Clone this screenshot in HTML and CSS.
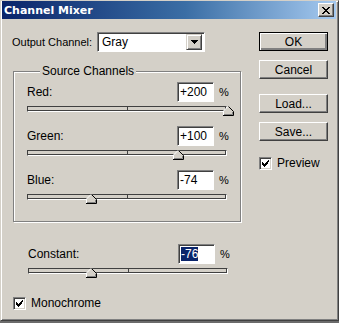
FILE: index.html
```html
<!DOCTYPE html>
<html lang="en">
<head>
    <meta charset="UTF-8">
    <title>Channel Mixer</title>
    <link rel="stylesheet" href="styles.css">
</head>
<body>
    <div class="window">
        <div class="titlebar">
            <span class="title">Channel Mixer</span>
            <button class="close-btn" type="button" aria-label="Close">
                <svg width="8" height="7" viewBox="0 0 8 7" shape-rendering="crispEdges">
                    <path d="M0 0h2v1H0zM6 0h2v1H6zM1 1h2v1H1zM5 1h2v1H5zM2 2h4v1H2zM3 3h2v1H3zM2 4h4v1H2zM1 5h2v1H1zM5 5h2v1H5zM0 6h2v1H0zM6 6h2v1H6z" fill="#000"/>
                </svg>
            </button>
        </div>

        <div class="client">
            <div class="main">
                <div class="output-row">
                    <span class="output-label">Output Channel:</span>
                    <div class="combo">
                        <span class="combo-text">Gray</span>
                        <span class="combo-arrow">
                            <svg width="7" height="4" viewBox="0 0 7 4" shape-rendering="crispEdges">
                                <path d="M0 0h7v1H0zM1 1h5v1H1zM2 2h3v1H2zM3 3h1v1H3z" fill="#000"/>
                            </svg>
                        </span>
                    </div>
                </div>

                <div class="group">
                    <div class="group-title">Source Channels</div>

                    <div class="channel">
                        <div class="channel-head">
                            <span class="channel-label">Red:</span>
                            <span class="num-box">+200</span>
                            <span class="pct">%</span>
                        </div>
                        <div class="slider">
                            <span class="thumb" style="left: 195px;"><svg width="11" height="10" viewBox="0 0 11 10"><polygon points="0.5,5 5.5,0 10.5,5 10.5,9.5 0.5,9.5" fill="#d4d0c8"/><polyline points="0.5,9 0.5,5 5,0.5" fill="none" stroke="#fff"/><polyline points="5.5,0.5 10.5,5.5 10.5,9.5 0,9.5" fill="none" stroke="#000"/><polyline points="9.5,6 9.5,8.5 1,8.5" fill="none" stroke="#808080"/></svg></span>
                        </div>
                    </div>

                    <div class="channel">
                        <div class="channel-head">
                            <span class="channel-label">Green:</span>
                            <span class="num-box">+100</span>
                            <span class="pct">%</span>
                        </div>
                        <div class="slider">
                            <span class="thumb" style="left: 145px;"><svg width="11" height="10" viewBox="0 0 11 10"><polygon points="0.5,5 5.5,0 10.5,5 10.5,9.5 0.5,9.5" fill="#d4d0c8"/><polyline points="0.5,9 0.5,5 5,0.5" fill="none" stroke="#fff"/><polyline points="5.5,0.5 10.5,5.5 10.5,9.5 0,9.5" fill="none" stroke="#000"/><polyline points="9.5,6 9.5,8.5 1,8.5" fill="none" stroke="#808080"/></svg></span>
                        </div>
                    </div>

                    <div class="channel">
                        <div class="channel-head">
                            <span class="channel-label">Blue:</span>
                            <span class="num-box">-74</span>
                            <span class="pct">%</span>
                        </div>
                        <div class="slider">
                            <span class="thumb" style="left: 58px;"><svg width="11" height="10" viewBox="0 0 11 10"><polygon points="0.5,5 5.5,0 10.5,5 10.5,9.5 0.5,9.5" fill="#d4d0c8"/><polyline points="0.5,9 0.5,5 5,0.5" fill="none" stroke="#fff"/><polyline points="5.5,0.5 10.5,5.5 10.5,9.5 0,9.5" fill="none" stroke="#000"/><polyline points="9.5,6 9.5,8.5 1,8.5" fill="none" stroke="#808080"/></svg></span>
                        </div>
                    </div>
                </div>

                <div class="channel constant">
                    <div class="channel-head">
                        <span class="channel-label">Constant:</span>
                        <span class="num-box"><span class="selected">-76</span></span>
                        <span class="pct">%</span>
                    </div>
                    <div class="slider">
                        <span class="thumb" style="left: 57px;"><svg width="11" height="10" viewBox="0 0 11 10"><polygon points="0.5,5 5.5,0 10.5,5 10.5,9.5 0.5,9.5" fill="#d4d0c8"/><polyline points="0.5,9 0.5,5 5,0.5" fill="none" stroke="#fff"/><polyline points="5.5,0.5 10.5,5.5 10.5,9.5 0,9.5" fill="none" stroke="#000"/><polyline points="9.5,6 9.5,8.5 1,8.5" fill="none" stroke="#808080"/></svg></span>
                    </div>
                </div>

                <label class="check mono">
                    <span class="check-box">
                        <svg width="7" height="7" viewBox="0 0 7 7" shape-rendering="crispEdges"><path d="M6 0h1v1H6zM5 1h2v1H5zM0 2h1v1H0zM4 2h2v1H4zM0 3h2v1H0zM3 3h3v1H3zM0 4h5v1H0zM1 5h3v1H1zM2 6h1v1H2z" fill="#000"/></svg>
                    </span>
                    <span>Monochrome</span>
                </label>
            </div>

            <div class="side">
                <button class="btn btn-default" type="button">OK</button>
                <button class="btn" type="button">Cancel</button>
                <button class="btn btn-gap" type="button">Load...</button>
                <button class="btn" type="button">Save...</button>
                <label class="check preview">
                    <span class="check-box">
                        <svg width="7" height="7" viewBox="0 0 7 7" shape-rendering="crispEdges"><path d="M6 0h1v1H6zM5 1h2v1H5zM0 2h1v1H0zM4 2h2v1H4zM0 3h2v1H0zM3 3h3v1H3zM0 4h5v1H0zM1 5h3v1H1zM2 6h1v1H2z" fill="#000"/></svg>
                    </span>
                    <span>Preview</span>
                </label>
            </div>
        </div>
    </div>
</body>
</html>
```

FILE: styles.css
```css
body {
    margin: 0;
    background: #6b6b6b;
    font-family: 'Liberation Sans', Arial, sans-serif;
    font-size: 11px;
    color: #000;
}
.window {
    width: 339px;
    height: 321px;
    box-sizing: border-box;
    background: #d4d0c8;
    border: 1px solid;
    border-color: #d4d0c8 #404040 #404040 #d4d0c8;
    box-shadow: inset 1px 1px #fff, inset -1px -1px #808080;
    padding: 0 2px 0 1px;
}
.titlebar {
    height: 18px;
    display: flex;
    align-items: center;
    justify-content: space-between;
    background: linear-gradient(90deg, #0a246a 0%, #3a6ea5 55%, #a6caf0 100%);
    padding: 0 2px 0 2px;
}
.title {
    color: #fff;
    font-family: 'DejaVu Sans', sans-serif;
    font-weight: bold;
    font-size: 11px;
}
.close-btn {
    width: 16px;
    height: 14px;
    padding: 0;
    display: flex;
    align-items: center;
    justify-content: center;
    background: #d4d0c8;
    border: 1px solid;
    border-color: #fff #404040 #404040 #fff;
    box-shadow: inset -1px -1px #808080;
}

/* client area */
.client {
    display: flex;
    gap: 16px;
    padding: 13px 0 0 10px;
}
.main {
    width: 231px;
}
.output-row {
    display: flex;
    align-items: center;
}
.output-label {
    width: 85px;
}
.combo {
    width: 108px;
    height: 20px;
    box-sizing: border-box;
    display: flex;
    align-items: center;
    background: #fff;
    border: 1px solid;
    border-color: #808080 #fff #fff #808080;
    box-shadow: inset 1px 1px #404040;
    padding: 2px 2px 2px 4px;
}
.combo-text {
    flex: 1;
    font-size: 12px;
}
.combo-arrow {
    width: 16px;
    height: 16px;
    box-sizing: border-box;
    display: flex;
    align-items: center;
    justify-content: center;
    background: #d4d0c8;
    border: 1px solid;
    border-color: #d4d0c8 #404040 #404040 #d4d0c8;
    box-shadow: inset 1px 1px #fff, inset -1px -1px #808080;
}

/* group box */
.group {
    margin: 19px 0 0 1px;
    width: 228px;
    height: 151px;
    box-sizing: border-box;
    border: 1px solid #808080;
    box-shadow: inset 1px 1px #fff, 1px 1px #fff;
    padding: 0 0 0 13px;
}
.group-title {
    width: max-content;
    margin: -7px 0 4px 13px;
    padding: 0 2px;
    line-height: 13px;
    font-size: 12px;
    background: #d4d0c8;
}

.channel {
    width: 200px;
    margin-bottom: 14px;
}
.channel-head {
    display: flex;
    align-items: center;
    height: 20px;
}
.channel-label {
    flex: 1;
    font-size: 12px;
}
.num-box {
    width: 37px;
    height: 20px;
    box-sizing: border-box;
    background: #fff;
    border: 1px solid;
    border-color: #808080 #fff #fff #808080;
    box-shadow: inset 1px 1px #404040;
    padding: 2px 0 0 2px;
    font-size: 12px;
    line-height: 15px;
}
.selected {
    background: #0a246a;
    color: #fff;
}
.pct {
    width: 8px;
    margin-left: 5px;
    font-size: 11px;
}
.slider {
    position: relative;
    margin-top: 4px;
    height: 6px;
    box-sizing: border-box;
    background: #d4d0c8;
    border: 1px solid;
    border-color: #404040 #fff #fff #404040;
    box-shadow: inset -1px -1px #404040;
}
.slider::after {
    content: '';
    position: absolute;
    left: 99px;
    top: 0;
    width: 1px;
    height: 4px;
    background: #404040;
}
.thumb {
    position: absolute;
    top: -1px;
    display: block;
    width: 11px;
    height: 10px;
    z-index: 1;
}
.thumb svg {
    display: block;
}

.constant {
    margin: 22px 0 0 16px;
    width: 200px;
}

/* checkboxes */
.check {
    display: flex;
    align-items: center;
    gap: 5px;
    font-size: 12px;
}
.check-box {
    width: 13px;
    height: 13px;
    box-sizing: border-box;
    display: flex;
    align-items: center;
    justify-content: center;
    background: #fff;
    border: 1px solid;
    border-color: #808080 #fff #fff #808080;
    box-shadow: inset 1px 1px #404040, inset -1px -1px #d4d0c8;
}
.mono {
    margin: 22px 0 0 1px;
}

/* right column */
.side {
    display: flex;
    flex-direction: column;
    width: 69px;
}
.btn {
    width: 69px;
    height: 19px;
    margin-bottom: 9px;
    padding: 0;
    font-family: inherit;
    font-size: 12px;
    background: #d4d0c8;
    border: 1px solid;
    border-color: #fff #404040 #404040 #fff;
    box-shadow: inset -1px -1px #808080;
}
.btn-default {
    border-color: #000;
    box-shadow: inset 1px 1px #fff, inset -2px -2px #808080;
}
.btn-gap {
    margin-top: 6px;
}
.preview {
    margin-top: 6px;
}
```
